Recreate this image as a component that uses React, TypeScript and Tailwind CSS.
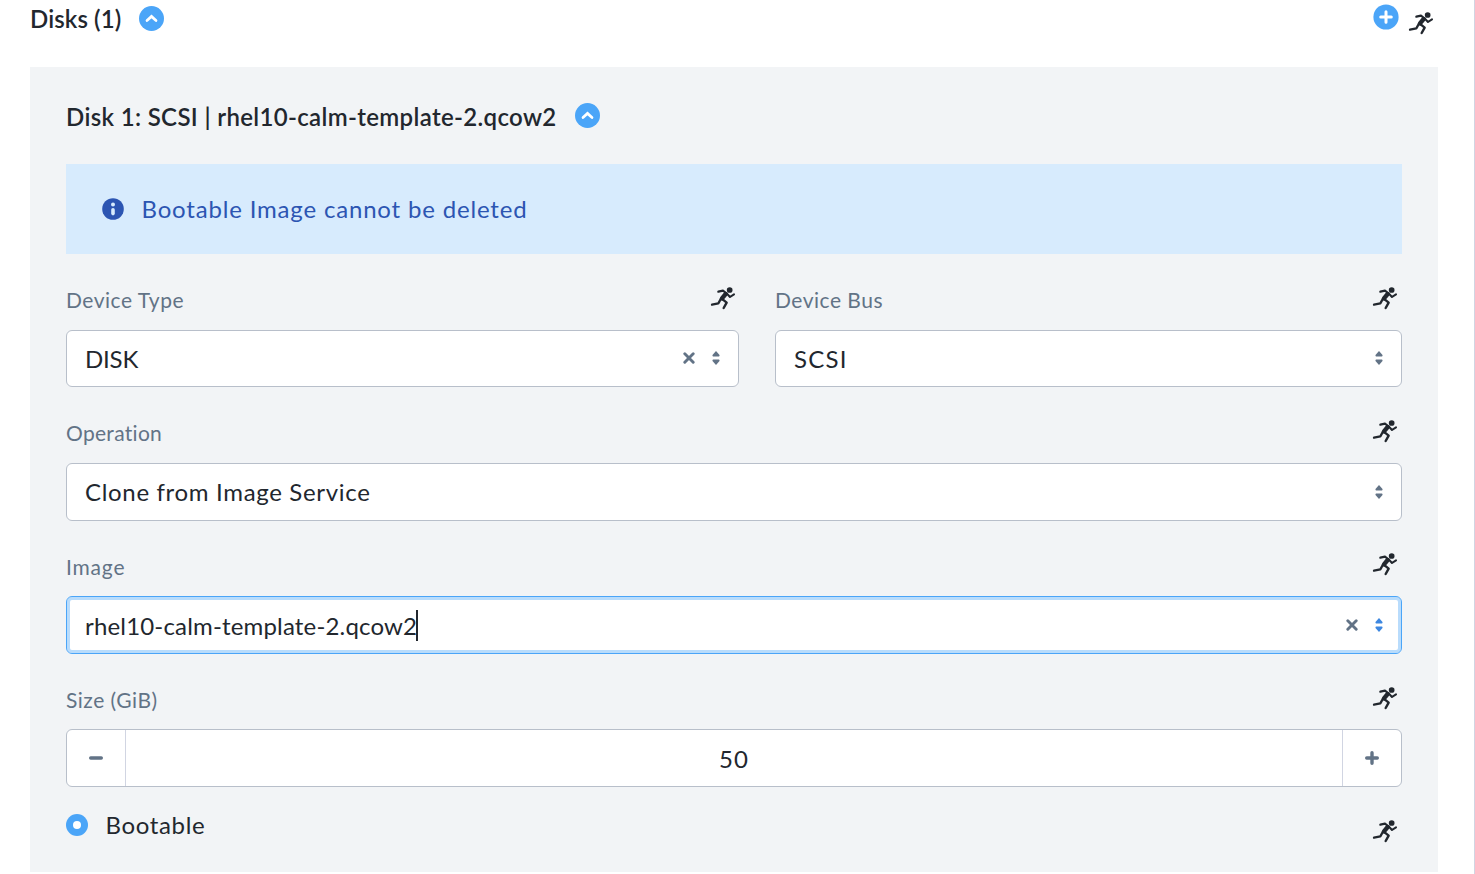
import React from "react";

function Runner() {
  return (
    <svg width="26" height="24" viewBox="0 0 78 72" fill="none" stroke="#22272e" strokeLinecap="round" strokeLinejoin="round" className="block shrink-0">
      <circle cx="59" cy="12" r="8.6" fill="#22272e" stroke="none" />
      <path d="M25 17 L39 14 L48 21" strokeWidth="6.5" />
      <path d="M47 24 L36 37" strokeWidth="13" />
      <path d="M50 22 L60 33 L72 25" strokeWidth="6.2" />
      <path d="M33 38 L25 52 L6 56" strokeWidth="6.8" />
      <path d="M38 40 L50 50 L41 66" strokeWidth="7.2" />
    </svg>
  );
}

function Collapse() {
  return (
    <svg width="25" height="25" viewBox="0 0 25 25" className="block shrink-0">
      <circle cx="12.5" cy="12.5" r="12.5" fill="#4ba5f8" />
      <path d="M8 14.6 L12.5 10.4 L17 14.6" fill="none" stroke="#fff" strokeWidth="2.7" strokeLinecap="round" />
    </svg>
  );
}

function Cross() {
  return (
    <svg width="12" height="12" viewBox="0 0 12 12" className="block">
      <path d="M1.8 1.8 L10.2 10.2 M10.2 1.8 L1.8 10.2" stroke="#627386" strokeWidth="2.9" strokeLinecap="round" />
    </svg>
  );
}

function Sorter({ color }: { color: string }) {
  return (
    <svg width="8" height="14" viewBox="0 0 8 14" className="block" fill={color}>
      <path d="M4 0 L7.5 4 Q7.8 5.3 6.9 5.4 H1.1 Q0.2 5.3 0.5 4 Z" />
      <path d="M4 14 L7.5 10 Q7.8 8.7 6.9 8.6 H1.1 Q0.2 8.7 0.5 10 Z" />
    </svg>
  );
}

function Label({ text, spacing, height, iconTop = "pt-8", inset = "pr-1" }: { text: string; spacing: string; height: string; iconTop?: string; inset?: string }) {
  return (
    <div className={"flex justify-between " + height + " " + inset}>
      <span className={"pt-8 text-[21px] leading-7 text-[#627386] " + spacing}>{text}</span>
      <div className={iconTop}>
        <Runner />
      </div>
    </div>
  );
}

function Select({ value, spacing, height, clearable = false, focused = false }: { value: string; spacing: string; height: string; clearable?: boolean; focused?: boolean }) {
  return (
    <div
      className={
        "flex items-center rounded-md border bg-white pl-[18px] pr-[17.5px] " +
        height +
        (focused ? " border-[#4ba5f8] shadow-[inset_0_0_0_3px_#b9dcfc]" : " border-[#b8bfca]")
      }
    >
      <span className={"whitespace-nowrap text-[24px] leading-8 text-[#22272e] " + spacing + (focused || height === "h-[57px]" ? " pt-px" : " pb-px")}>{value}</span>
      {focused && <span className="-ml-px h-[31px] w-[2px] bg-[#22272e]" />}
      <div className={"ml-auto mr-[0.5px] flex items-center gap-[17px] " + (height === "h-[57px]" ? "pb-px" : "")}>
        {clearable && <Cross />}
        <Sorter color={focused ? "#3d87e0" : "#627386"} />
      </div>
    </div>
  );
}

export default function App() {
  return (
    <div className="h-[874px] w-[1475px] overflow-hidden border-r border-[#d1d5e2] bg-white pl-[30px] pr-9 font-['Lato',sans-serif]">
      <header className="flex h-[67px] items-start justify-between pr-1">
        <div className="flex pt-[6px]">
          <h2 className="-mt-px w-[109px] whitespace-nowrap text-[24px] font-semibold leading-7 tracking-[0.1px] text-[#22272e]">Disks (1)</h2>
          <Collapse />
        </div>
        <div className="flex gap-[9px]">
          <svg width="26" height="26" viewBox="0 0 26 26" className="mt-1 block">
            <circle cx="13" cy="13" r="12.6" fill="#4ba5f8" />
            <path d="M13 7.7 V18.3 M7.7 13 H18.3" stroke="#fff" strokeWidth="3" strokeLinecap="round" />
          </svg>
          <div className="pt-[11px]">
            <Runner />
          </div>
        </div>
      </header>

      <section className="h-[805px] bg-[#f2f4f6] px-9">
        <div className="flex h-[97px] pt-9">
          <h3 className="w-[509px] whitespace-nowrap text-[24px] font-semibold leading-7 tracking-[0.34px] text-[#22272e]">Disk 1: SCSI | rhel10-calm-template-2.qcow2</h3>
          <Collapse />
        </div>

        <div className="flex h-[90px] items-center bg-[#d7ebfd] pl-9">
          <svg width="22" height="22" viewBox="0 0 22 22" className="block">
            <circle cx="11" cy="11" r="10.8" fill="#2c55b2" />
            <circle cx="11" cy="6.4" r="2" fill="#d7ebfd" />
            <rect x="9.2" y="10" width="3.6" height="7.4" rx="1.8" fill="#d7ebfd" />
          </svg>
          <span className="pl-[17.5px] text-[24px] leading-8 tracking-[0.82px] text-[#2c55b2]">Bootable Image cannot be deleted</span>
        </div>

        <div className="flex gap-9">
          <div className="w-[673px]">
            <Label text="Device Type" spacing="tracking-[0.5px]" height="h-[76px]" inset="pr-[3px]" />
            <Select value="DISK" spacing="tracking-[-0.2px]" height="h-[57px]" clearable />
          </div>
          <div className="flex-1">
            <Label text="Device Bus" spacing="tracking-[0.5px]" height="h-[76px]" />
            <Select value="SCSI" spacing="tracking-[1.2px]" height="h-[57px]" />
          </div>
        </div>

        <Label text="Operation" spacing="tracking-[0.3px]" height="h-[76px]" />
        <Select value="Clone from Image Service" spacing="tracking-[0.67px]" height="h-[58px]" />

        <Label text="Image" spacing="tracking-[0.8px]" height="h-[75px]" iconTop="pt-[31px]" />
        <Select value="rhel10-calm-template-2.qcow2" spacing="tracking-[0.17px]" height="h-[58px]" clearable focused />

        <Label text="Size (GiB)" spacing="tracking-[0.5px]" height="h-[75px]" />
        <div className="flex h-[58px] rounded-md border border-[#b8bfca] bg-white">
          <div className="flex w-[59px] items-center justify-center border-r border-[#d1d5e2]">
            <svg width="14" height="14" viewBox="0 0 14 14">
              <path d="M1.7 7 H12.3" stroke="#627386" strokeWidth="3.4" strokeLinecap="round" />
            </svg>
          </div>
          <div className="flex flex-1 items-center justify-center pt-px text-[24px] leading-8 tracking-[1px] text-[#22272e]">50</div>
          <div className="flex w-[59px] items-center justify-center border-l border-[#d1d5e2]">
            <svg width="14" height="14" viewBox="0 0 14 14">
              <path d="M1.7 7 H12.3 M7 1.7 V12.3" stroke="#627386" strokeWidth="3.4" strokeLinecap="round" />
            </svg>
          </div>
        </div>

        <div className="flex items-start pr-1">
          <svg width="22" height="22" viewBox="0 0 22 22" className="mt-[27px] block">
            <circle cx="11" cy="11" r="11" fill="#4ba5f8" />
            <circle cx="11" cy="11" r="4" fill="#fff" />
          </svg>
          <span className="pl-[17.5px] pt-[22px] text-[24px] leading-8 tracking-[0.65px] text-[#22272e]">Bootable</span>
          <div className="ml-auto pt-8">
            <Runner />
          </div>
        </div>
      </section>
    </div>
  );
}
